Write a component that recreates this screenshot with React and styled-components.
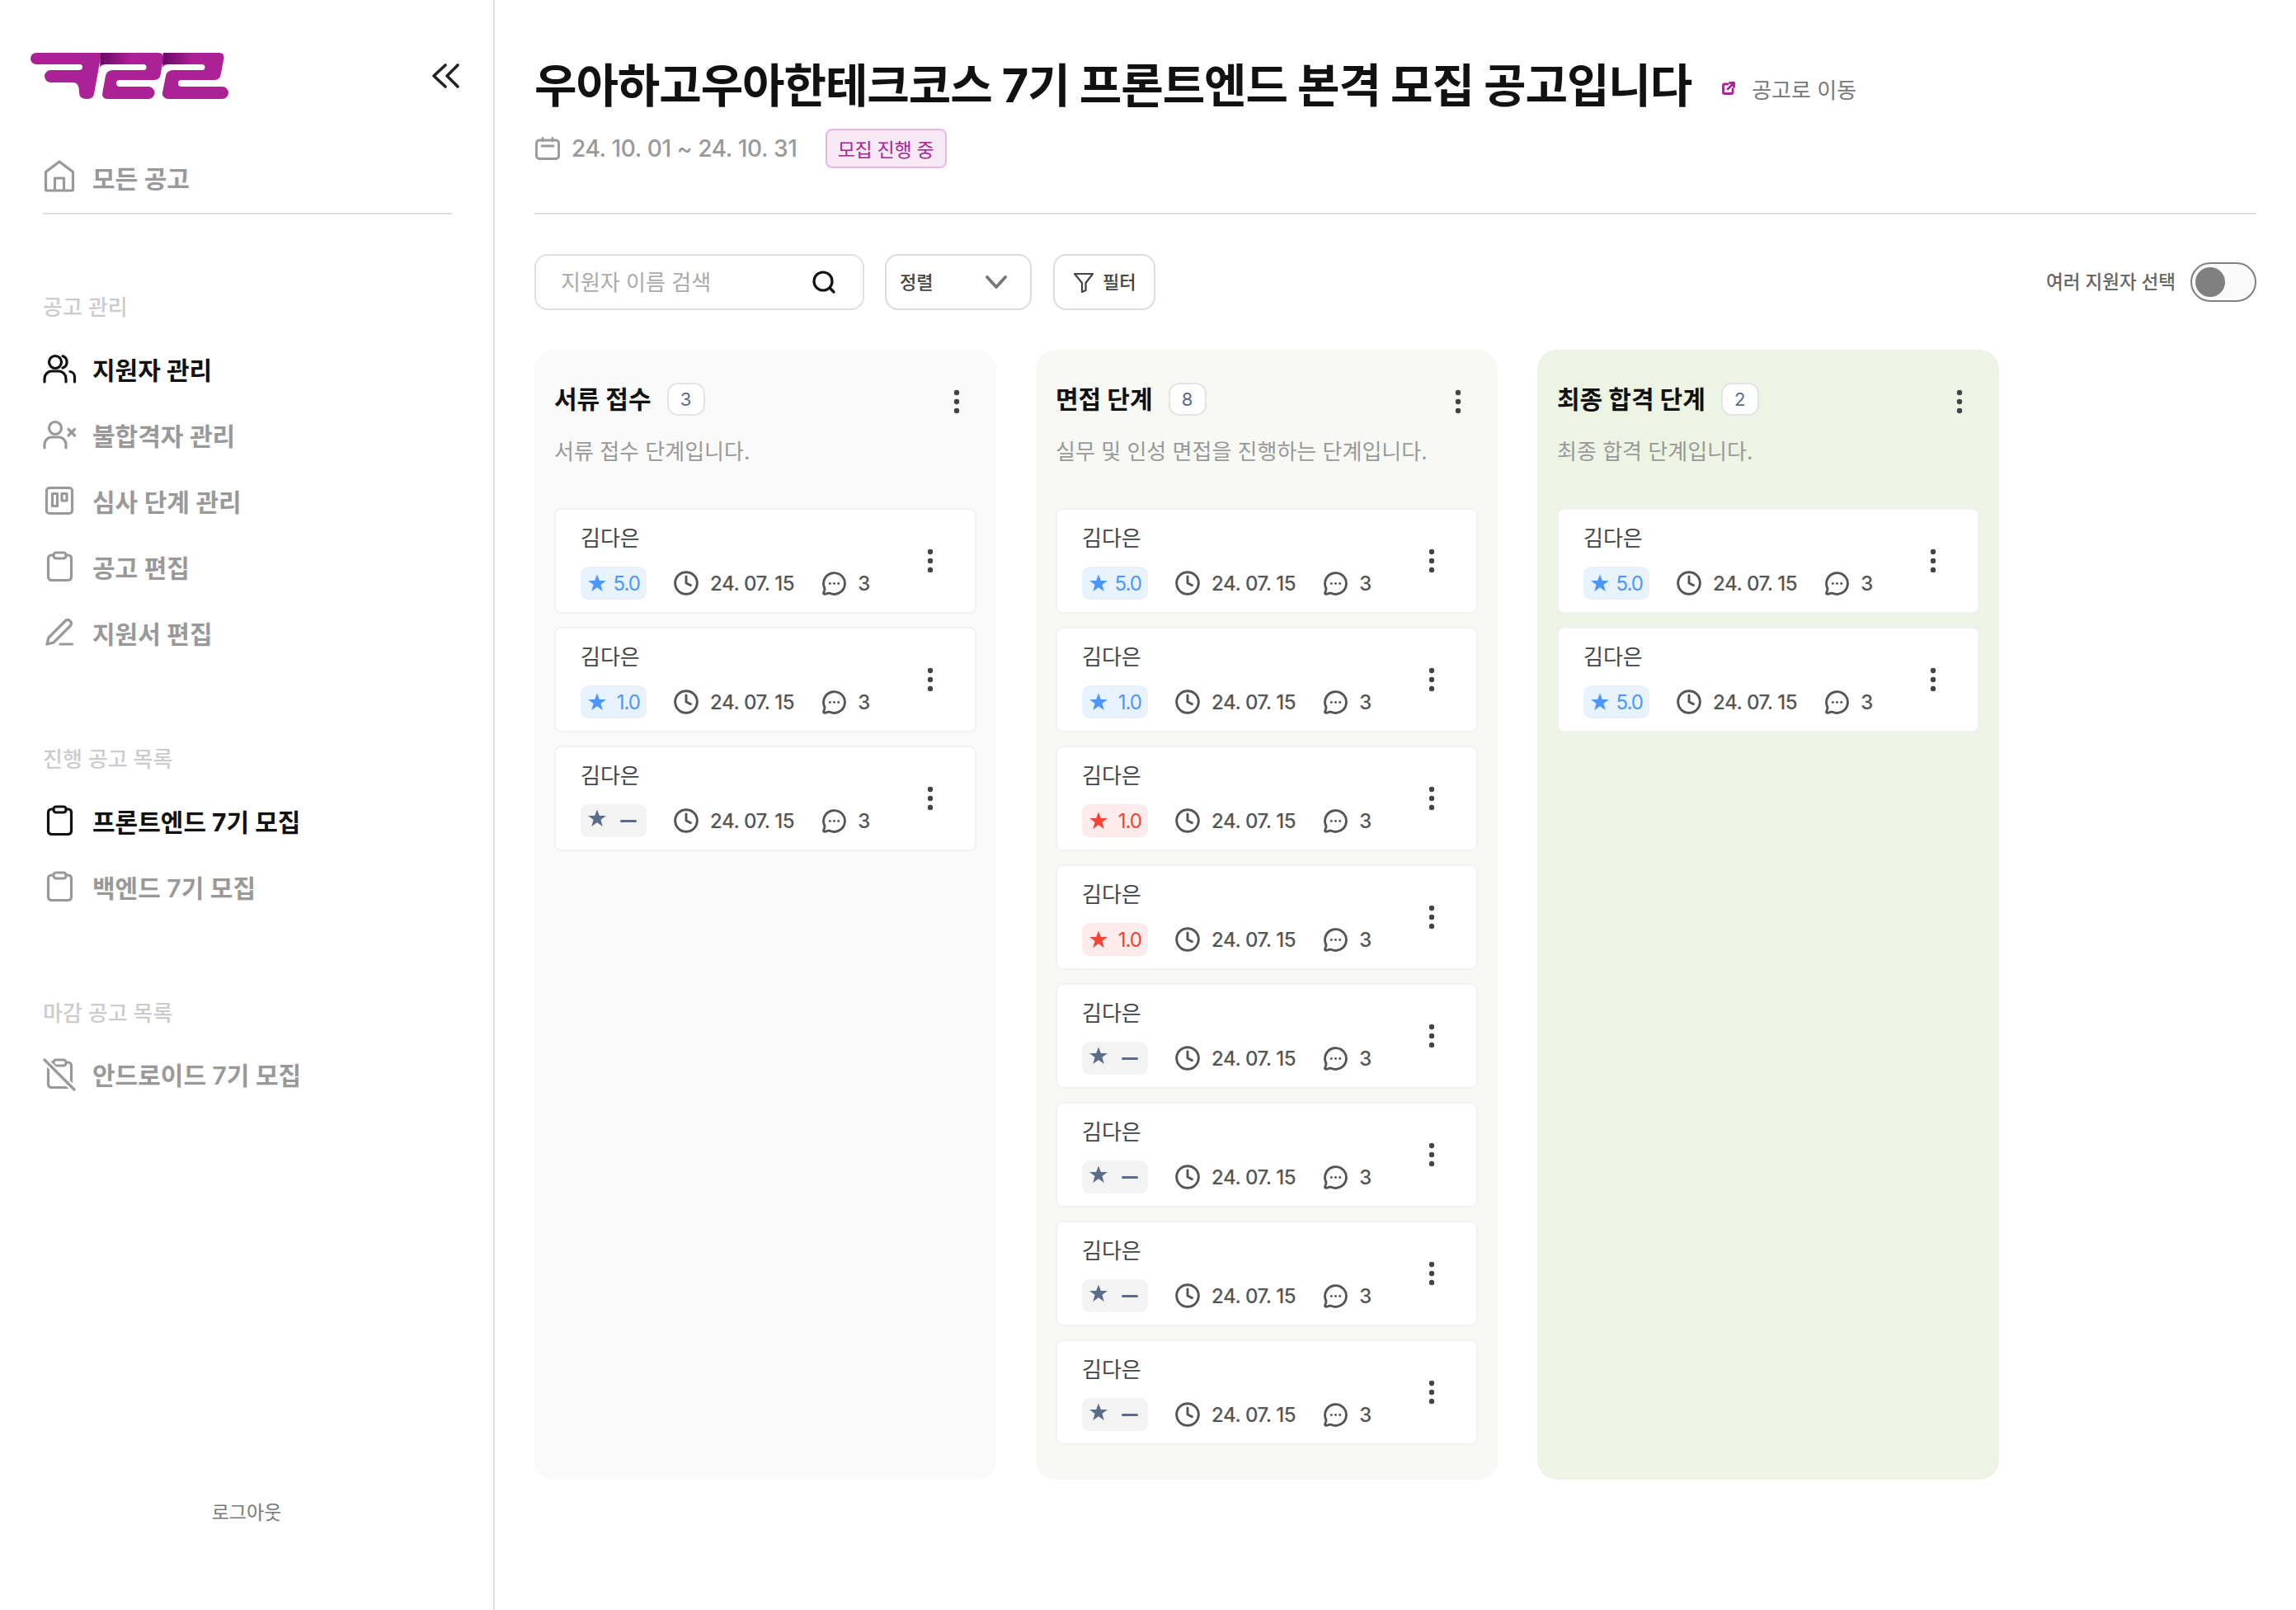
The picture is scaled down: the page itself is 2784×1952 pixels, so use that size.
import React from "react";
import styled, { createGlobalStyle } from "styled-components";
import { Clock, MessageCircleMore } from "lucide-react";

const FONT = `"Inter", "Noto Sans CJK KR", "Noto Sans", sans-serif`;

const Global = createGlobalStyle`
  html, body { margin: 0; padding: 0; background: #fff; }
  body { font-family: ${FONT}; }
  * { box-sizing: border-box; }
`;

const Page = styled.div`
  display: flex;
  width: 2784px;
  height: 1952px;
  background: #fff;
  overflow: hidden;
`;
const Sidebar = styled.aside`
  width: 600px;
  flex: none;
  border-right: 2px solid #e0e0e0;
  display: flex;
  flex-direction: column;
`;
const SideTop = styled.div`
  display: flex;
  align-items: center;
  justify-content: space-between;
  padding: 64px 40px 0 37px;
  height: 120px;
`;
const LogoSvg = styled.svg`
  width: 240px;
  height: 56px;
  display: block;
`;
const CollapseSvg = styled.svg`
  width: 36px;
  height: 32px;
  display: block;
`;
const NavWrap = styled.nav`
  padding: 0 50px 0 52px;
  display: flex;
  flex-direction: column;
  flex: 1;
`;
const HomeBlock = styled.div`
  padding-top: 73px;
  padding-bottom: 21px;
  border-bottom: 2px solid #e0e0e0;
  margin-bottom: 93px;
`;
const Group = styled.div`
  display: flex;
  flex-direction: column;
  margin-bottom: ${(p) => p.$gap || 0}px;
`;
const GroupTitle = styled.div`
  font-size: 26px;
  line-height: 40px;
  height: 40px;
  color: #cccccc;
  font-weight: 500;
  margin-bottom: ${(p) => p.$mb || 14}px;
`;
const NavItem = styled.div`
  display: flex;
  align-items: center;
  gap: 16px;
  height: 80px;
  font-size: 30px;
  font-weight: ${(p) => (p.$active ? 700 : 600)};
  color: ${(p) => (p.$active ? "#111" : "#999")};
`;
const HomeItem = styled(NavItem)`
  height: 44px;
`;
const NavIconSvg = styled.svg`
  width: 44px;
  height: 44px;
  flex: none;
  fill: none;
  stroke: ${(p) => (p.$active ? "#111" : "#999")};
  stroke-width: 3.2;
  stroke-linecap: round;
  stroke-linejoin: round;
`;
const Logout = styled.div`
  text-align: center;
  font-size: 23px;
  color: #777;
  padding-bottom: 102px;
  line-height: 32px;
`;

const Main = styled.main`
  flex: 1;
  padding: 0 48px;
  display: flex;
  flex-direction: column;
  min-width: 0;
`;
const Header = styled.header`
  height: 260px;
  border-bottom: 2px solid #e0e0e0;
  padding-top: 65px;
`;
const TitleRow = styled.div`
  display: flex;
  align-items: center;
  height: 78px;
`;
const Title = styled.h1`
  margin: 0;
  font-size: 56px;
  letter-spacing: -1.1px;
  font-weight: 700;
  color: #111;
  line-height: 78px;
  white-space: nowrap;
`;
const GoLink = styled.a`
  display: flex;
  align-items: center;
  gap: 20px;
  margin-left: 37px;
  padding-top: 6px;
  font-size: 26px;
  color: #777;
`;
const LinkSvg = styled.svg`
  width: 16px;
  height: 16px;
  fill: none;
  stroke: #ab2296;
  stroke-width: 2.8;
  stroke-linecap: round;
  stroke-linejoin: round;
`;
const MetaRow = styled.div`
  display: flex;
  align-items: center;
  margin-top: 13px;
`;
const CalSvg = styled.svg`
  width: 30px;
  height: 28px;
  margin-left: 1px;
  fill: none;
  stroke: #999;
  stroke-width: 2.8;
  stroke-linecap: round;
`;
const DateText = styled.span`
  margin-left: 14px;
  font-size: 28px;
  letter-spacing: -0.35px;
  font-weight: 500;
  color: #999;
`;
const StatusBadge = styled.span`
  margin-left: 34px;
  width: 147px;
  height: 48px;
  display: flex;
  align-items: center;
  justify-content: center;
  font-size: 23px;
  letter-spacing: -0.3px;
  color: #ab2296;
  background: #f7e9f5;
  border: 2px solid #e8b9e0;
  border-radius: 8px;
`;
const Toolbar = styled.div`
  display: flex;
  align-items: center;
  height: 68px;
  margin-top: 48px;
`;
const SearchBox = styled.div`
  width: 400px;
  height: 68px;
  border: 2px solid #e0e0e0;
  border-radius: 16px;
  display: flex;
  align-items: center;
  justify-content: space-between;
  padding: 0 32px 0 30px;
  font-size: 26px;
  color: #aaa;
`;
const RaisedLabel = styled.span`
  margin-bottom: 4px;
`;
const SearchSvg = styled.svg`
  width: 30px;
  height: 30px;
  fill: none;
  stroke: #111;
  stroke-width: 3.2;
  stroke-linecap: round;
`;
const ToolButton = styled.div`
  height: 68px;
  margin-left: ${(p) => p.$ml}px;
  width: ${(p) => p.$w}px;
  border: 2px solid #dcdcdc;
  border-radius: 16px;
  display: flex;
  align-items: center;
  font-size: 22px;
  font-weight: 500;
  color: #444;
  padding: 0 ${(p) => p.$pr}px 0 ${(p) => p.$pl}px;
  justify-content: ${(p) => (p.$between ? "space-between" : "flex-start")};
  gap: ${(p) => p.$gap || 0}px;
`;
const ChevSvg = styled.svg`
  width: 26px;
  height: 22px;
  fill: none;
  stroke: #777;
  stroke-width: 3.8;
  stroke-linecap: round;
  stroke-linejoin: round;
`;
const FunnelSvg = styled.svg`
  width: 26px;
  height: 26px;
  fill: none;
  stroke: #444;
  stroke-width: 2.2;
  stroke-linejoin: round;
`;
const SwitchWrap = styled.div`
  margin-left: auto;
  display: flex;
  align-items: center;
  gap: 18px;
  font-size: 22.5px;
  font-weight: 500;
  color: #666;
`;
const SwitchTrack = styled.div`
  width: 80px;
  height: 48px;
  border-radius: 24px;
  border: 2px solid #808080;
  background: #fafafa;
  padding: 4px;
`;
const SwitchKnob = styled.div`
  width: 36px;
  height: 36px;
  border-radius: 50%;
  background: #808080;
`;

const Board = styled.div`
  display: flex;
  align-items: stretch;
  gap: 48px;
  margin-top: 48px;
`;
const Column = styled.section`
  width: 560px;
  padding: 24px 24px 42px;
  border-radius: 24px;
  background: ${(p) => p.$bg};
`;
const ColHead = styled.div`
  display: flex;
  align-items: center;
  height: 64px;
  padding-top: 8px;
`;
const ColTitle = styled.h2`
  margin: 0;
  font-size: 30px;
  line-height: 40px;
  font-weight: 700;
  color: #111;
`;
const CountBadge = styled.span`
  margin-left: 19px;
  width: 46px;
  height: 40px;
  border-radius: 13px;
  border: 2px solid #e4e4e4;
  background: #fff;
  display: flex;
  align-items: center;
  justify-content: center;
  font-size: 22px;
  color: #5b6b8c;
`;
const KebabSvg = styled.svg`
  width: 8px;
  height: 30px;
  fill: #444;
  flex: none;
`;
const ColKebabSlot = styled.div`
  margin-left: auto;
  margin-right: 20px;
  display: flex;
  padding-top: 6px;
`;
const ColDesc = styled.p`
  margin: 18px 0 0;
  font-size: 26px;
  line-height: 36px;
  color: #999;
`;
const CardList = styled.div`
  margin-top: 50px;
  display: flex;
  flex-direction: column;
  gap: 16px;
`;
const Card = styled.article`
  height: 128px;
  background: #fff;
  border: 2px solid #f2f2f2;
  border-radius: 8px;
  padding: 0 50px 0 30px;
  display: flex;
  align-items: center;
  justify-content: space-between;
`;
const CardBody = styled.div`
  display: flex;
  flex-direction: column;
  padding-top: 2px;
`;
const CardName = styled.div`
  font-size: 26px;
  line-height: 36px;
  color: #444;
  margin-bottom: 16px;
`;
const CardMeta = styled.div`
  display: flex;
  align-items: center;
  height: 40px;
`;
const Rating = styled.div`
  width: 80px;
  height: 40px;
  border-radius: 9px;
  background: ${(p) => p.$bg};
  color: ${(p) => p.$fg};
  display: flex;
  align-items: center;
  justify-content: space-between;
  padding: 0 8px 0 9px;
  font-size: 24px;
  letter-spacing: -1px;
`;
const StarSvg = styled.svg`
  width: 22px;
  height: 22px;
  fill: currentColor;
  margin-top: ${(p) => (p.$raised ? -6 : 0)}px;
`;
const Dash = styled.span`
  width: 20px;
  height: 3px;
  background: currentColor;
  margin-right: 4px;
  border-radius: 2px;
`;
const MetaText = styled.span`
  font-size: 24px;
  font-weight: 500;
  letter-spacing: -0.45px;
  color: #555;
  margin-left: ${(p) => p.$ml}px;
`;
const ClockSlot = styled.span`
  display: flex;
  margin-left: 32px;
  color: #555;
`;
const CommentSlot = styled.span`
  display: flex;
  margin-left: 33px;
  color: #555;
`;

const Kebab = () => (
  <KebabSvg viewBox="0 0 8 30">
    <circle cx="4" cy="4" r="3.2" />
    <circle cx="4" cy="15" r="3.2" />
    <circle cx="4" cy="26" r="3.2" />
  </KebabSvg>
);

const Logo = () => (
  <LogoSvg viewBox="0 0 240 56">
    <defs>
      <linearGradient id="lg" x1="0" x2="1" y1="0" y2="0">
        <stop offset="0" stopColor="#6a0865" />
        <stop offset="1" stopColor="#ab2296" />
      </linearGradient>
    </defs>
    <g fill="#ab2296">
      <path d="M7 0H85L85.5 3L77 50Q76 56 68 56Q59 56 59 48Q59 36 52 36H24.5A7.5 7.5 0 0 1 24.5 21H58Q63 21 63 17.5Q63 14 60 14H7A7 7 0 0 1 7 0Z" />
      <path d="M85 0H155Q161.5 0 161 6L158 25Q157 33 150 33H108A4 4 0 0 0 108 41H143A7.5 7.5 0 0 1 143 56H94Q87 56 87 50L91 28Q92.5 21 100 21H137A3.5 3.5 0 0 0 137 14H92Q86 14 84 18Z" />
      <path d="M161 0H228Q235 0 234.5 6L231 25Q230 33 223 33H183A4 4 0 0 0 183 41H232.5A7.5 7.5 0 0 1 232.5 56H169Q159 56 160 48L164 28Q165.5 21 173 21H208A3.5 3.5 0 0 0 208 14H168Q162 14 160 18Z" />
    </g>
    <path d="M85 0H122V14H84.5Z" fill="url(#lg)" />
    <path d="M161 0H197V14H160Z" fill="url(#lg)" />
  </LogoSvg>
);

const Icon = ({ active, children }) => (
  <NavIconSvg viewBox="0 0 44 44" $active={active}>
    {children}
  </NavIconSvg>
);
const HomeIcon = () => (
  <Icon>
    <path d="M3.5 15.5L20 3L36.5 15.5V36.5Q36.5 38 35 38H5Q3.5 38 3.5 36.5Z" />
    <path d="M14.5 38V23H25.5V38" />
  </Icon>
);
const UsersIcon = ({ active }) => (
  <Icon active={active}>
    <circle cx="15" cy="14" r="7.5" />
    <path d="M2 38V34A9 9 0 0 1 11 25H19A9 9 0 0 1 28 34V38" />
    <path d="M24 6.8A7.5 7.5 0 0 1 24 21" />
    <path d="M33 25.5A6.5 6.5 0 0 1 38.5 32V38" />
  </Icon>
);
const UserXIcon = () => (
  <Icon>
    <circle cx="15" cy="14" r="7.5" />
    <path d="M2 38V34A9 9 0 0 1 11 25H19A9 9 0 0 1 28 34V38" />
    <path d="M31 15.5L38.5 23M38.5 15.5L31 23" />
  </Icon>
);
const KanbanIcon = () => (
  <Icon>
    <rect x="4.5" y="6.5" width="31" height="31" rx="3.5" />
    <rect x="11.5" y="13.5" width="6" height="15" />
    <rect x="23" y="13.5" width="6" height="8.5" />
  </Icon>
);
const ClipIcon = ({ active }) => (
  <Icon active={active}>
    <rect x="6.5" y="8" width="28" height="30.5" rx="4" />
    <rect x="13" y="5" width="15" height="7" rx="3" fill="#fff" />
  </Icon>
);
const PenIcon = () => (
  <Icon>
    <path d="M5 36L7 28L27 8Q30 5 33 8Q36 11 33 14L13 34Z" />
    <path d="M21 36H35.5" />
  </Icon>
);
const ClipOffIcon = () => (
  <Icon>
    <rect x="6.5" y="8" width="28" height="30.5" rx="4" />
    <rect x="13" y="5" width="15" height="7" rx="3" fill="#fff" />
    <path d="M2 5L38 41" stroke="#fff" strokeWidth="8" />
    <path d="M2 5L38 41" />
  </Icon>
);
const Star = ({ raised }) => (
  <StarSvg viewBox="0 0 22 22" $raised={raised}>
    <path d="M11 0.5L13.8 8H21.8L15.4 13L17.8 21L11 16.2L4.2 21L6.6 13L0.2 8H8.2Z" />
  </StarSvg>
);

const tones = {
  blue: { bg: "#e8f2ff", fg: "#4a97ff" },
  red: { bg: "#feebec", fg: "#f5433a" },
  none: { bg: "#f3f3f3", fg: "#5b6b8c" },
};

const ApplicantCard = ({ tone, score }) => (
  <Card>
    <CardBody>
      <CardName>김다은</CardName>
      <CardMeta>
        <Rating $bg={tones[tone].bg} $fg={tones[tone].fg}>
          <Star raised={!score} />
          {score ? <span>{score}</span> : <Dash />}
        </Rating>
        <ClockSlot>
          <Clock size={32} strokeWidth={2.2} />
        </ClockSlot>
        <MetaText $ml={13}>24. 07. 15</MetaText>
        <CommentSlot>
          <MessageCircleMore size={31} strokeWidth={2.2} />
        </CommentSlot>
        <MetaText $ml={13}>3</MetaText>
      </CardMeta>
    </CardBody>
    <Kebab />
  </Card>
);

const columns = [
  {
    title: "서류 접수",
    desc: "서류 접수 단계입니다.",
    bg: "#fafafa",
    cards: [["blue", "5.0"], ["blue", "1.0"], ["none", ""]],
  },
  {
    title: "면접 단계",
    desc: "실무 및 인성 면접을 진행하는 단계입니다.",
    bg: "#f8f9f4",
    cards: [
      ["blue", "5.0"],
      ["blue", "1.0"],
      ["red", "1.0"],
      ["red", "1.0"],
      ["none", ""],
      ["none", ""],
      ["none", ""],
      ["none", ""],
    ],
  },
  {
    title: "최종 합격 단계",
    desc: "최종 합격 단계입니다.",
    bg: "#eef4e3",
    cards: [["blue", "5.0"], ["blue", "5.0"]],
  },
];

export default function App() {
  return (
    <Page>
      <Global />
      <Sidebar>
        <SideTop>
          <Logo />
          <CollapseSvg viewBox="0 0 36 32" fill="none" stroke="#222" strokeWidth="3.6" strokeLinecap="round" strokeLinejoin="round">
            <path d="M18 3L4 16L18 29" />
            <path d="M33 3L20 16L33 29" />
          </CollapseSvg>
        </SideTop>
        <NavWrap>
          <HomeBlock>
            <HomeItem>
              <HomeIcon />
              모든 공고
            </HomeItem>
          </HomeBlock>
          <Group $gap={94}>
            <GroupTitle>공고 관리</GroupTitle>
            <NavItem $active><UsersIcon active />지원자 관리</NavItem>
            <NavItem><UserXIcon />불합격자 관리</NavItem>
            <NavItem><KanbanIcon />심사 단계 관리</NavItem>
            <NavItem><ClipIcon />공고 편집</NavItem>
            <NavItem><PenIcon />지원서 편집</NavItem>
          </Group>
          <Group $gap={94}>
            <GroupTitle>진행 공고 목록</GroupTitle>
            <NavItem $active><ClipIcon active />프론트엔드 7기 모집</NavItem>
            <NavItem><ClipIcon />백엔드 7기 모집</NavItem>
          </Group>
          <Group>
            <GroupTitle $mb={13}>마감 공고 목록</GroupTitle>
            <NavItem><ClipOffIcon />안드로이드 7기 모집</NavItem>
          </Group>
        </NavWrap>
        <Logout>로그아웃</Logout>
      </Sidebar>
      <Main>
        <Header>
          <TitleRow>
            <Title>우아하고우아한테크코스 7기 프론트엔드 본격 모집 공고입니다</Title>
            <GoLink>
              <LinkSvg viewBox="0 0 16 16">
                <path d="M7 3H3Q1.5 3 1.5 4.5V13Q1.5 14.5 3 14.5H11.500Q13 14.5 13 13V9" />
                <path d="M9.500 1.500H14.500V6.500M14.500 1.500L7 9" />
              </LinkSvg>
              공고로 이동
            </GoLink>
          </TitleRow>
          <MetaRow>
            <CalSvg viewBox="0 0 30 28">
              <rect x="1.5" y="4" width="27" height="22.5" rx="3.5" />
              <path d="M9 1.5V5M21 1.5V5M8 11H22" />
            </CalSvg>
            <DateText>24. 10. 01 ~ 24. 10. 31</DateText>
            <StatusBadge>모집 진행 중</StatusBadge>
          </MetaRow>
        </Header>
        <Toolbar>
          <SearchBox>
            <RaisedLabel>지원자 이름 검색</RaisedLabel>
            <SearchSvg viewBox="0 0 30 30">
              <circle cx="14" cy="14" r="11" />
              <path d="M22.500 22.500L27 27" />
            </SearchSvg>
          </SearchBox>
          <ToolButton $ml={25} $w={178} $pl={16} $pr={28} $between>
            <RaisedLabel>정렬</RaisedLabel>
            <ChevSvg viewBox="0 0 26 22">
              <path d="M2 5L13 17L24 5" />
            </ChevSvg>
          </ToolButton>
          <ToolButton $ml={26} $w={124} $pl={22} $pr={20} $gap={10}>
            <FunnelSvg viewBox="0 0 26 26">
              <path d="M2 3H24L15.500 14V23L11 25V14Z" />
            </FunnelSvg>
            <RaisedLabel>필터</RaisedLabel>
          </ToolButton>
          <SwitchWrap>
            <RaisedLabel>여러 지원자 선택</RaisedLabel>
            <SwitchTrack>
              <SwitchKnob />
            </SwitchTrack>
          </SwitchWrap>
        </Toolbar>
        <Board>
          {columns.map((c) => (
            <Column key={c.title} $bg={c.bg}>
              <ColHead>
                <ColTitle>{c.title}</ColTitle>
                <CountBadge>{c.cards.length}</CountBadge>
                <ColKebabSlot>
                  <Kebab />
                </ColKebabSlot>
              </ColHead>
              <ColDesc>{c.desc}</ColDesc>
              <CardList>
                {c.cards.map(([tone, score], i) => (
                  <ApplicantCard key={i} tone={tone} score={score} />
                ))}
              </CardList>
            </Column>
          ))}
        </Board>
      </Main>
    </Page>
  );
}
